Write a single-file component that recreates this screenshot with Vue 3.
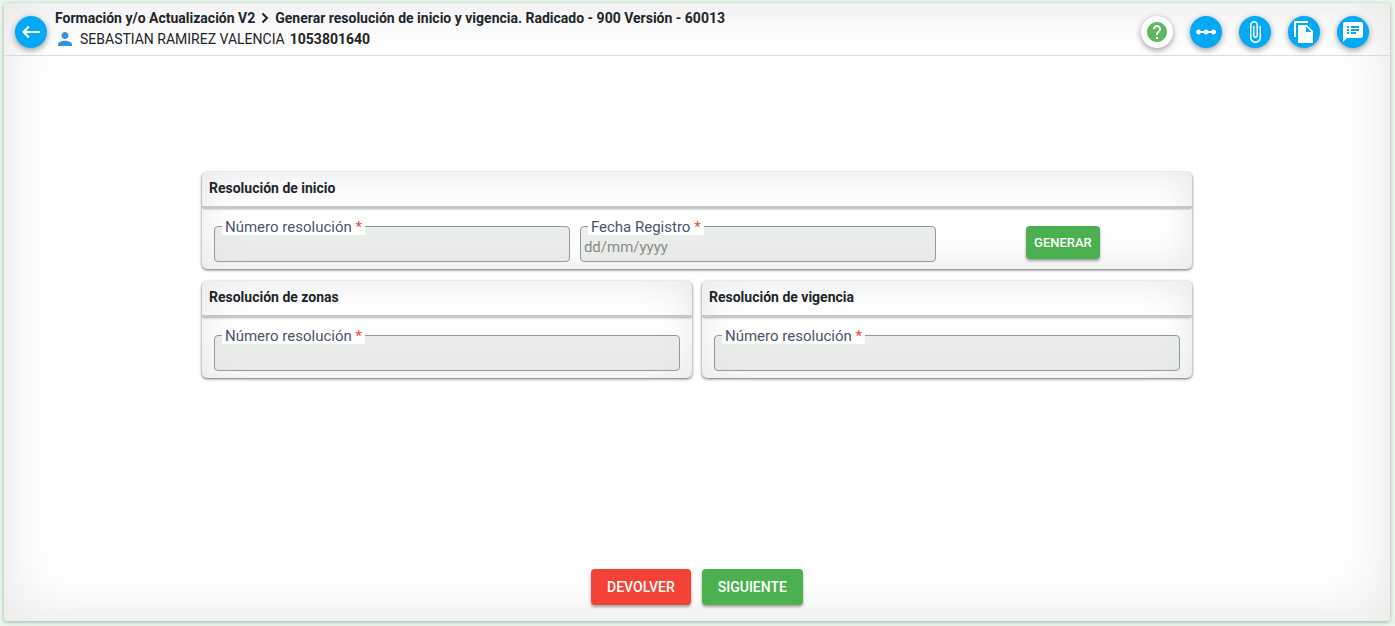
<script setup>
import { ref } from 'vue'

const startNumber = ref('')
const startDate = ref('')

const actions = [
  { id: 'steps', label: 'Flujo', path: 'M19.5 9.5c-1.03 0-1.9.62-2.29 1.5h-2.92c-.39-.88-1.26-1.5-2.29-1.5s-1.9.62-2.29 1.5H6.79c-.39-.88-1.26-1.5-2.29-1.5C3.12 9.5 2 10.62 2 12s1.12 2.5 2.5 2.5c1.03 0 1.9-.62 2.29-1.5h2.92c.39.88 1.26 1.5 2.29 1.5s1.9-.62 2.29-1.5h2.92c.39.88 1.26 1.5 2.29 1.5 1.38 0 2.5-1.12 2.5-2.5s-1.12-2.5-2.5-2.5z' },
  { id: 'attach', label: 'Adjuntos', path: 'M16.5 6v11.5c0 2.21-1.79 4-4 4s-4-1.79-4-4V5c0-1.38 1.12-2.5 2.5-2.5s2.5 1.12 2.5 2.5v10.5c0 .55-.45 1-1 1s-1-.45-1-1V6H10v9.500c0 1.380 1.120 2.500 2.500 2.500s2.500-1.120 2.500-2.500V5c0-2.210-1.790-4-4-4S7 2.790 7 5v12.500c0 3.040 2.460 5.500 5.500 5.500s5.500-2.460 5.500-5.500V6h-1.500z' },
  { id: 'files', label: 'Documentos', path: 'M16 1H2v16h2V3h12V1zm-1 4l6 6v12H6V5h9zm-1 7h5.500L14 6.500V12z' },
  { id: 'notes', label: 'Observaciones', path: 'M20 2H4c-1.100 0-1.990.9-1.990 2L2 22l4-4h14c1.100 0 2-.9 2-2V4c0-1.100-.9-2-2-2zM8 14H6v-2h2v2zm0-3H6V9h2v2zm0-3H6V6h2v2zm7 6h-5v-2h5v2zm3-3h-8V9h8v2zm0-3h-8V6h8v2z' }
]

const secondary = [
  { id: 'zonas', title: 'Resolución de zonas', value: '' },
  { id: 'vigencia', title: 'Resolución de vigencia', value: '' }
]
</script>

<template>
  <div class="shell">
    <header class="topbar">
      <button class="round blue" type="button" aria-label="Volver">
        <svg class="arrow" viewBox="0 0 24 24" aria-hidden="true">
          <path d="M21 12H4.500M10 6.500L4.500 12l5.500 5.500" fill="none" stroke="currentColor" stroke-width="2" />
        </svg>
      </button>
      <div class="heading">
        <h1 class="crumbs">
          <span>Formación y/o Actualización V2</span>
          <svg class="chevron" viewBox="0 0 8 12" aria-hidden="true">
            <path d="M1.500 1.500L6 6l-4.500 4.500" fill="none" stroke="currentColor" stroke-width="2" />
          </svg>
          <span>Generar resolución de inicio y vigencia. Radicado - 900 Versión - 60013</span>
        </h1>
        <p class="person">
          <svg class="user" viewBox="4 4 16 16" aria-hidden="true">
            <path d="M12 12c2.210 0 4-1.790 4-4s-1.790-4-4-4-4 1.790-4 4 1.790 4 4 4zm0 2c-2.670 0-8 1.340-8 4v2h16v-2c0-2.660-5.330-4-8-4z" fill="currentColor" />
          </svg>
          <span>SEBASTIAN RAMIREZ VALENCIA</span>
          <strong>1053801640</strong>
        </p>
      </div>
      <nav class="actions" aria-label="Acciones">
        <button class="round white" type="button" aria-label="Ayuda">
          <svg viewBox="0 0 24 24" aria-hidden="true">
            <path fill="currentColor" d="M12 2C6.480 2 2 6.480 2 12s4.480 10 10 10 10-4.480 10-10S17.520 2 12 2zm1 17h-2v-2h2v2zm2.070-7.750l-.9.920C13.450 12.900 13 13.500 13 15h-2v-.5c0-1.100.45-2.100 1.170-2.830l1.240-1.260c.37-.36.59-.86.59-1.410 0-1.100-.9-2-2-2s-2 .9-2 2H8c0-2.210 1.790-4 4-4s4 1.790 4 4c0 .88-.36 1.680-.93 2.250z" />
          </svg>
        </button>
        <button v-for="a in actions" :key="a.id" class="round blue" type="button" :aria-label="a.label">
          <svg viewBox="0 0 24 24" aria-hidden="true"><path :d="a.path" fill="currentColor" /></svg>
        </button>
      </nav>
    </header>

    <main class="content">
      <form class="cards" @submit.prevent>
        <section class="card wide">
          <h2 class="card-title">Resolución de inicio</h2>
          <div class="card-body triple">
            <div class="field">
              <label for="inicio-numero">Número resolución <span class="req">*</span></label>
              <input id="inicio-numero" v-model="startNumber" type="text" disabled>
            </div>
            <div class="field">
              <label for="inicio-fecha">Fecha Registro <span class="req">*</span></label>
              <input id="inicio-fecha" v-model="startDate" type="text" placeholder="dd/mm/yyyy" disabled>
            </div>
            <button class="btn green small" type="button">GENERAR</button>
          </div>
        </section>
        <section v-for="s in secondary" :key="s.id" class="card">
          <h2 class="card-title">{{ s.title }}</h2>
          <div class="card-body">
            <div class="field">
              <label :for="s.id">Número resolución <span class="req">*</span></label>
              <input :id="s.id" type="text" :value="s.value" disabled>
            </div>
          </div>
        </section>
      </form>
    </main>

    <footer class="footer">
      <button class="btn red" type="button">DEVOLVER</button>
      <button class="btn green" type="button">SIGUIENTE</button>
    </footer>
  </div>
</template>

<style>
body {
  background: #e8f8ea;
}
#app {
  display: flex;
  min-height: 100vh;
}
</style>

<style scoped>
.shell,
.shell * {
  box-sizing: border-box;
}
.shell {
  flex: 1;
  min-width: 0;
  display: flex;
  flex-direction: column;
  margin: 3px 5px 5px 4px;
  background: #fff;
  border-radius: 3px;
  box-shadow: 0 1px 4px rgba(0, 0, 0, 0.3), inset 0 0 60px rgba(0, 0, 0, 0.11);
  font-family: Roboto, "Liberation Sans", sans-serif;
  font-size: 14px;
  line-height: 20px;
  color: #212529;
}
.topbar {
  display: flex;
  align-items: center;
  gap: 8px;
  min-height: 53px;
  padding: 5px 21px 0 11px;
  border-bottom: 1px solid #dcdcdc;
}
.heading {
  flex: 1;
  align-self: flex-start;
}
.crumbs {
  display: flex;
  align-items: center;
  gap: 6px;
  margin: 0;
  font-size: 14px;
  line-height: 20px;
  font-weight: 700;
}
.chevron {
  width: 8px;
  height: 12px;
}
.person {
  display: flex;
  align-items: center;
  gap: 5px;
  margin: 1px 0 0;
  padding-left: 3px;
}
.user {
  width: 14px;
  height: 14px;
  margin-right: 3px;
  color: #3593da;
}
.actions {
  display: flex;
  gap: 17px;
}
.round {
  display: flex;
  align-items: center;
  justify-content: center;
  width: 32px;
  height: 32px;
  padding: 0;
  border: 0;
  border-radius: 50%;
  box-shadow: 0 2px 6px rgba(0, 0, 0, 0.4);
}
.round svg {
  width: 24px;
  height: 24px;
}
.blue {
  background: #03a9f4;
  color: #fff;
}
.white {
  background: #fff;
  color: #5cb860;
}
.content {
  flex: 1;
  padding-top: 116px;
}
.cards {
  display: grid;
  grid-template-columns: 1fr 1fr;
  gap: 12px 10px;
  width: calc(100% * 5 / 7);
  margin: 0 auto;
}
.card {
  border-radius: 5px;
  background: #fff;
  box-shadow: 0 1px 3px rgba(0, 0, 0, 0.6), inset 0 0 40px rgba(0, 0, 0, 0.1);
}
.wide {
  grid-column: 1 / -1;
}
.card-title {
  margin: 0;
  padding: 6px 7px 8px;
  border-bottom: 2px solid #c6c6c6;
  box-shadow: 0 2px 2px -1px rgba(0, 0, 0, 0.3);
  font-size: 14px;
  line-height: 20px;
  font-weight: 700;
}
.card-body {
  padding: 18px 12px 7px;
}
.triple {
  display: grid;
  grid-template-columns: 38fr 38fr 25fr;
  gap: 10px;
}
.field {
  position: relative;
}
.field label {
  position: absolute;
  top: -6px;
  left: 8px;
  padding: 0 3px;
  background: #fff;
  color: #4a5568;
  font-size: 15px;
  line-height: 15px;
}
.req {
  color: #f44336;
}
.field input {
  display: block;
  width: 100%;
  height: 36px;
  padding: 6px 3px 0;
  border: 1px solid #8d99a5;
  border-radius: 4px;
  background: rgba(220, 225, 220, 0.6);
  color: #495057;
  font-family: inherit;
  font-size: 15px;
}
.field input::placeholder {
  color: #8b8b8b;
  opacity: 1;
}
.btn {
  height: 36px;
  padding: 0 16px;
  border: 0;
  border-radius: 4px;
  box-shadow: 0 2px 3px rgba(0, 0, 0, 0.35);
  color: #fff;
  font-family: inherit;
  font-size: 14px;
  font-weight: 500;
}
.small {
  justify-self: center;
  height: 33px;
  padding: 0 8px;
  font-size: 13px;
}
.green {
  background: #4caf50;
}
.red {
  background: #f44336;
}
.footer {
  display: flex;
  justify-content: center;
  gap: 11px;
  padding-bottom: 16px;
}
</style>
